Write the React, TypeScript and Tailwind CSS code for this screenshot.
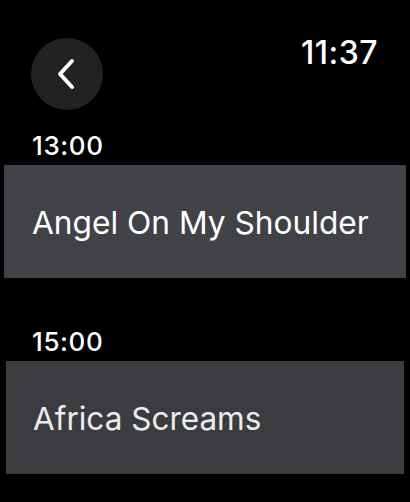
import React from "react";

const Slot: React.FC<{ time: string; title: string; dim?: boolean }> = ({ time, title, dim }) => (
  <div className="flex flex-col">
    <div className="pt-[2px] pl-[32px] text-[26px] font-medium leading-[30px] tracking-[0.6px] text-white">{time}</div>
    <div
      className={
        dim
          ? "mt-[4px] mx-[6px] h-[113px] bg-[#3b3c40] flex items-center pt-[2px] pl-[27px] text-[31.5px] text-[#ececec]"
          : "mt-[4px] mx-[4px] h-[113px] bg-[#414247] flex items-center pt-[2px] pl-[28px] text-[31.7px] text-white"
      }
    >
      {title}
    </div>
  </div>
);

export default function App() {
  return (
    <div className="w-[410px] h-[502px] bg-black overflow-hidden" style={{ fontFamily: "Inter, 'Open Sans', sans-serif" }}>
      <div className="flex justify-between items-start pt-[38px] pl-[31px] pr-[32px]">
        <button className="w-[72px] h-[72px] rounded-full bg-[#222222] flex items-center justify-center">
          <svg width="20" height="32" viewBox="0 0 20 32" className="-ml-[2px]">
            <path d="M16 3 L4 16 L16 29" fill="none" stroke="white" strokeWidth="4" strokeLinecap="round" strokeLinejoin="round" />
          </svg>
        </button>
        <div className="text-[32px] font-medium leading-none tracking-[0.5px] text-white mt-[-1px]">11:37</div>
      </div>
      <div className="mt-[19px]">
        <Slot time="13:00" title="Angel On My Shoulder" />
      </div>
      <div className="mt-[47px]">
        <Slot time="15:00" title="Africa Screams" dim />
      </div>
    </div>
  );
}
